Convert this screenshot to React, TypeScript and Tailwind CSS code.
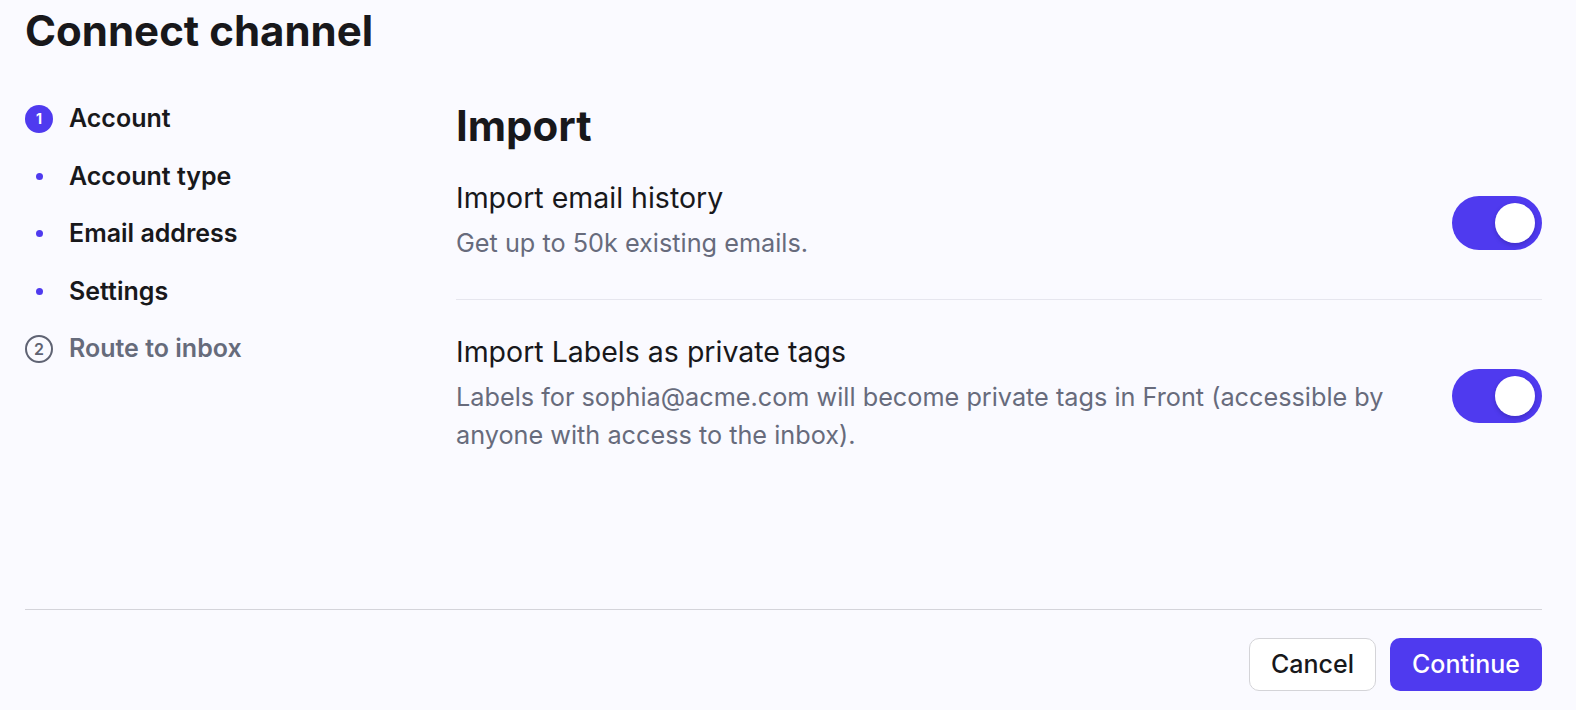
import React from "react";

function Toggle({ className = "" }: { className?: string }) {
  return (
    <div
      className={`relative flex h-[54px] w-[90px] shrink-0 items-center justify-end rounded-full bg-[#4f3aef] pr-[7px] ${className}`}
    >
      <div className="h-[40px] w-[40px] rounded-full bg-white shadow-[0_2px_4px_rgba(20,10,80,0.25)]" />
    </div>
  );
}

export default function App() {
  const steps = ["Account type", "Email address", "Settings"];
  return (
    <div
      className="flex h-screen w-full flex-col bg-[#fafaff] pl-[25px] pr-[34px] text-[#18181b]"
      style={{ fontFamily: "Inter, 'Noto Sans', sans-serif" }}
    >
      <h1 className="pt-[6px] text-[42px] font-bold leading-[50px]">Connect channel</h1>

      <div className="flex flex-1">
        {/* Left steps */}
        <div className="w-[431px] shrink-0 pt-[34px]">
          <div className="flex h-[57.5px] items-center">
            <div className="flex w-[44px] shrink-0 items-center">
              <div className="flex h-[28px] w-[28px] items-center justify-center rounded-full bg-[#4f3aef] text-[14px] font-bold text-white">
                1
              </div>
            </div>
            <span className="text-[25px] font-semibold leading-none">Account</span>
          </div>
          {steps.map((s) => (
            <div key={s} className="flex h-[57.5px] items-center">
              <div className="flex w-[44px] shrink-0 items-center">
                <div className="flex w-[28px] justify-center">
                  <div className="h-[7px] w-[7px] rounded-full bg-[#4f3aef]" />
                </div>
              </div>
              <span className="text-[25px] font-semibold leading-none">{s}</span>
            </div>
          ))}
          <div className="flex h-[57.5px] items-center">
            <div className="flex w-[44px] shrink-0 items-center">
              <div className="flex h-[28px] w-[28px] items-center justify-center rounded-full border-2 border-[#5f6373] text-[16px] font-semibold text-[#5f6373]">
                2
              </div>
            </div>
            <span className="text-[25px] font-semibold leading-none text-[#666b7b]">Route to inbox</span>
          </div>
        </div>

        {/* Right content */}
        <div className="flex-1">
          <h2 className="pt-[45px] text-[42px] font-bold leading-[50px]">Import</h2>

          <div className="mt-[29px] flex items-center gap-[52px] border-b border-[#e6e6ee] pb-[37px]">
            <div className="flex-1">
              <div className="text-[28.5px] leading-[36px]">Import email history</div>
              <div className="mt-[8px] text-[25.25px] leading-[38px] text-[#676b7c]">Get up to 50k existing emails.</div>
            </div>
            <Toggle className="mt-[4px]" />
          </div>

          <div className="flex items-center gap-[52px] pt-[34px]">
            <div className="flex-1">
              <div className="text-[28.5px] leading-[36px]">Import Labels as private tags</div>
              <div className="mt-[8px] text-[25.25px] leading-[38px] text-[#676b7c]">
                Labels for sophia@acme.com will become private tags in Front (accessible by anyone with access to the inbox).
              </div>
            </div>
            <Toggle className="mt-[4px]" />
          </div>
        </div>
      </div>

      <div className="flex justify-end gap-[14px] border-t border-[#d4d4da] pb-[19px] pt-[28px]">
        <button className="flex h-[53px] w-[127px] items-center justify-center rounded-[10px] border border-[#d4d4d8] bg-white text-[25px] font-medium text-[#18181b]">
          Cancel
        </button>
        <button className="flex h-[53px] w-[152px] items-center justify-center rounded-[10px] bg-[#4f3aef] text-[25px] font-medium text-white">
          Continue
        </button>
      </div>
    </div>
  );
}
